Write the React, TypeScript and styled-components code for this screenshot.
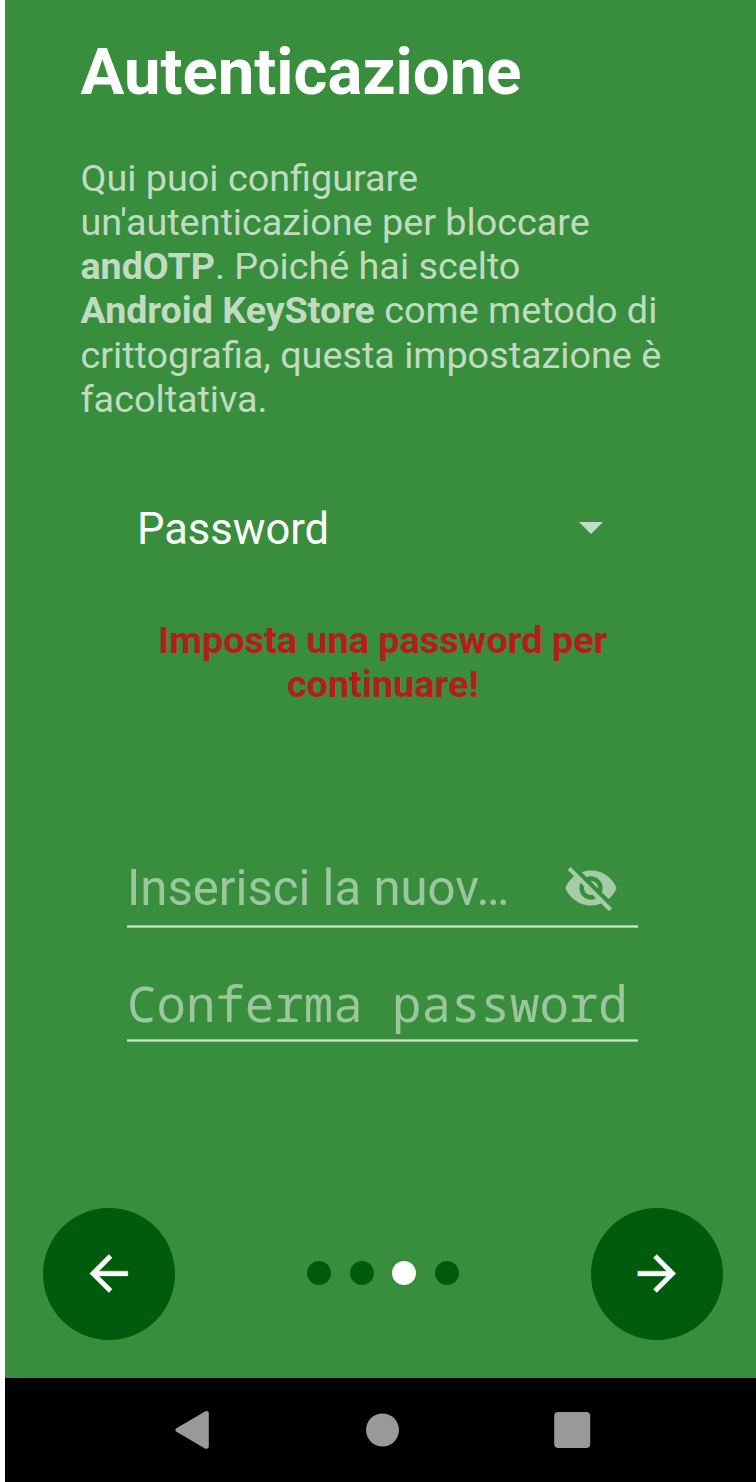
import React from 'react';
import styled, { createGlobalStyle } from 'styled-components';

const GlobalStyle = createGlobalStyle`
  * { box-sizing: border-box; }
  body { margin: 0; background: #fff; font-family: Roboto, sans-serif; }
`;

const Screen = styled.main`
  width: 751px;
  height: 1482px;
  margin-left: 5px;
  display: flex;
  flex-direction: column;
  background: #388e3c;
  overflow: hidden;
`;

const Content = styled.section`
  height: 1207.5px;
  display: flex;
  flex-direction: column;
  padding: 34px 76px 0 75.5px;
`;

const Title = styled.h1`
  margin: 0;
  font-size: 65.2px;
  line-height: 76px;
  font-weight: 700;
  color: #fff;
`;

const Description = styled.p`
  margin: 46px 0 0;
  font-size: 37.75px;
  line-height: 44.15px;
  color: rgba(255, 255, 255, 0.7);
  white-space: nowrap;
  b { font-weight: 700; font-size: 37.6px; }
`;

const Select = styled.div`
  display: flex;
  align-items: center;
  justify-content: space-between;
  height: 60px;
  margin: 79px 77px 0 56.5px;
  font-size: 43.5px;
  color: #fff;
  svg { margin-bottom: 4px; }
`;

const Warning = styled.p`
  margin: 57.7px 0 0;
  padding-left: 5px;
  font-size: 37.8px;
  line-height: 44.1px;
  font-weight: 700;
  text-align: center;
  color: #b71c1c;
`;

const Form = styled.div`
  display: flex;
  flex-direction: column;
  width: 511px;
  margin: 141px 0 0 46.5px;
`;

const Field = styled.div<{ $height: number; $top: number; $mono?: boolean }>`
  display: flex;
  align-items: center;
  justify-content: space-between;
  height: ${p => p.$height}px;
  padding: ${p => p.$top}px 19px 0 0;
  font-family: ${p => (p.$mono ? '"Noto Sans Mono", "DejaVu Sans Mono", monospace' : 'Roboto, sans-serif')};
  font-size: 49.1px;
  color: rgba(255, 255, 255, 0.5);
  white-space: nowrap;
`;

const Underline = styled.div`
  height: 3px;
  background: linear-gradient(
    rgba(255, 255, 255, 0.5) 1px,
    rgba(255, 255, 255, 0.75) 1px 2px,
    rgba(255, 255, 255, 0.5) 2px
  );
`;

const Footer = styled.footer`
  height: 170.5px;
  display: flex;
  align-items: flex-start;
  justify-content: space-between;
  padding: 0 33px 0 38px;
`;

const RoundButton = styled.button`
  width: 132px;
  height: 132px;
  padding: 0;
  border: 0;
  border-radius: 50%;
  display: grid;
  place-items: center;
  background: #005b0d;
`;

const Dots = styled.div`
  display: flex;
  gap: 18.7px;
  height: 131px;
  align-items: center;
`;

const Dot = styled.i<{ $active?: boolean }>`
  width: 24px;
  height: 24px;
  border-radius: 50%;
  background: ${p => (p.$active ? '#fff' : '#005b0d')};
`;

const NavBar = styled.nav`
  height: 104px;
  background: #000;
  svg { display: block; }
`;

export default function App() {
  return (
    <>
      <GlobalStyle />
      <Screen>
        <Content>
          <Title>Autenticazione</Title>
          <Description>
            Qui puoi configurare<br />
            un'autenticazione per bloccare<br />
            <b>andOTP</b>. Poiché hai scelto<br />
            <b>Android KeyStore</b> come metodo di<br />
            crittografia, questa impostazione è<br />
            facoltativa.
          </Description>
          <Select>
            <span>Password</span>
            <svg width="24" height="12" viewBox="0 0 24 12"><path d="M0 0h24L12 12z" fill="#c3ddc4" /></svg>
          </Select>
          <Warning>Imposta una password per<br />continuare!</Warning>
          <Form>
            <Field $height={78} $top={4}>
              <span>Inserisci la nuov…</span>
              <svg width="56" height="56" viewBox="0 0 24 24" fill="rgba(255,255,255,0.55)">
                <path d="M12 7c2.76 0 5 2.24 5 5 0 .65-.13 1.26-.36 1.83l2.92 2.92c1.51-1.26 2.7-2.89 3.43-4.75-1.73-4.39-6-7.5-11-7.5-1.4 0-2.74.25-3.98.7l2.16 2.16C10.74 7.13 11.35 7 12 7zM2 4.27l2.28 2.28.46.46C3.08 8.3 1.78 10.02 1 12c1.73 4.39 6 7.5 11 7.5 1.55 0 3.03-.3 4.38-.84l.42.42L19.73 22 21 20.73 3.27 3 2 4.27zM7.53 9.8l1.55 1.55c-.05.21-.08.43-.08.65 0 1.66 1.34 3 3 3 .22 0 .44-.03.65-.08l1.55 1.55c-.67.33-1.41.53-2.2.53-2.76 0-5-2.24-5-5 0-.79.2-1.53.53-2.2zm4.31-.78 3.15 3.15.02-.16c0-1.66-1.34-3-3-3l-.17.01z" />
              </svg>
            </Field>
            <Underline />
            <Field $height={111} $top={39} $mono><span>Conferma password</span></Field>
            <Underline />
          </Form>
        </Content>
        <Footer>
          <RoundButton aria-label="Indietro">
            <svg width="57" height="57" viewBox="0.3 0 24 24"><path d="M20 11H7.830l5.590-5.590L12 4l-8 8 8 8 1.410-1.410L7.830 13H20z" fill="#fff" stroke="#fff" strokeWidth="0.15" /></svg>
          </RoundButton>
          <Dots><Dot /><Dot /><Dot $active /><Dot /></Dots>
          <RoundButton aria-label="Avanti">
            <svg width="57" height="57" viewBox="0.3 0 24 24"><path d="M12 4l-1.410 1.410L16.170 11H4v2h12.170l-5.580 5.590L12 20l8-8z" fill="#fff" stroke="#fff" strokeWidth="0.15" /></svg>
          </RoundButton>
        </Footer>
        <NavBar>
          <svg width="751" height="104" viewBox="0 0 751 104" fill="#999">
            <path d="M171 50.500Q169.500 52 171 53.500L200 70.500Q203.800 71.500 203.800 68V36Q203.800 32 200 33.500z" />
            <circle cx="377.500" cy="52" r="16.500" />
            <rect x="549.200" y="34" width="36" height="36" rx="4" />
          </svg>
        </NavBar>
      </Screen>
    </>
  );
}
